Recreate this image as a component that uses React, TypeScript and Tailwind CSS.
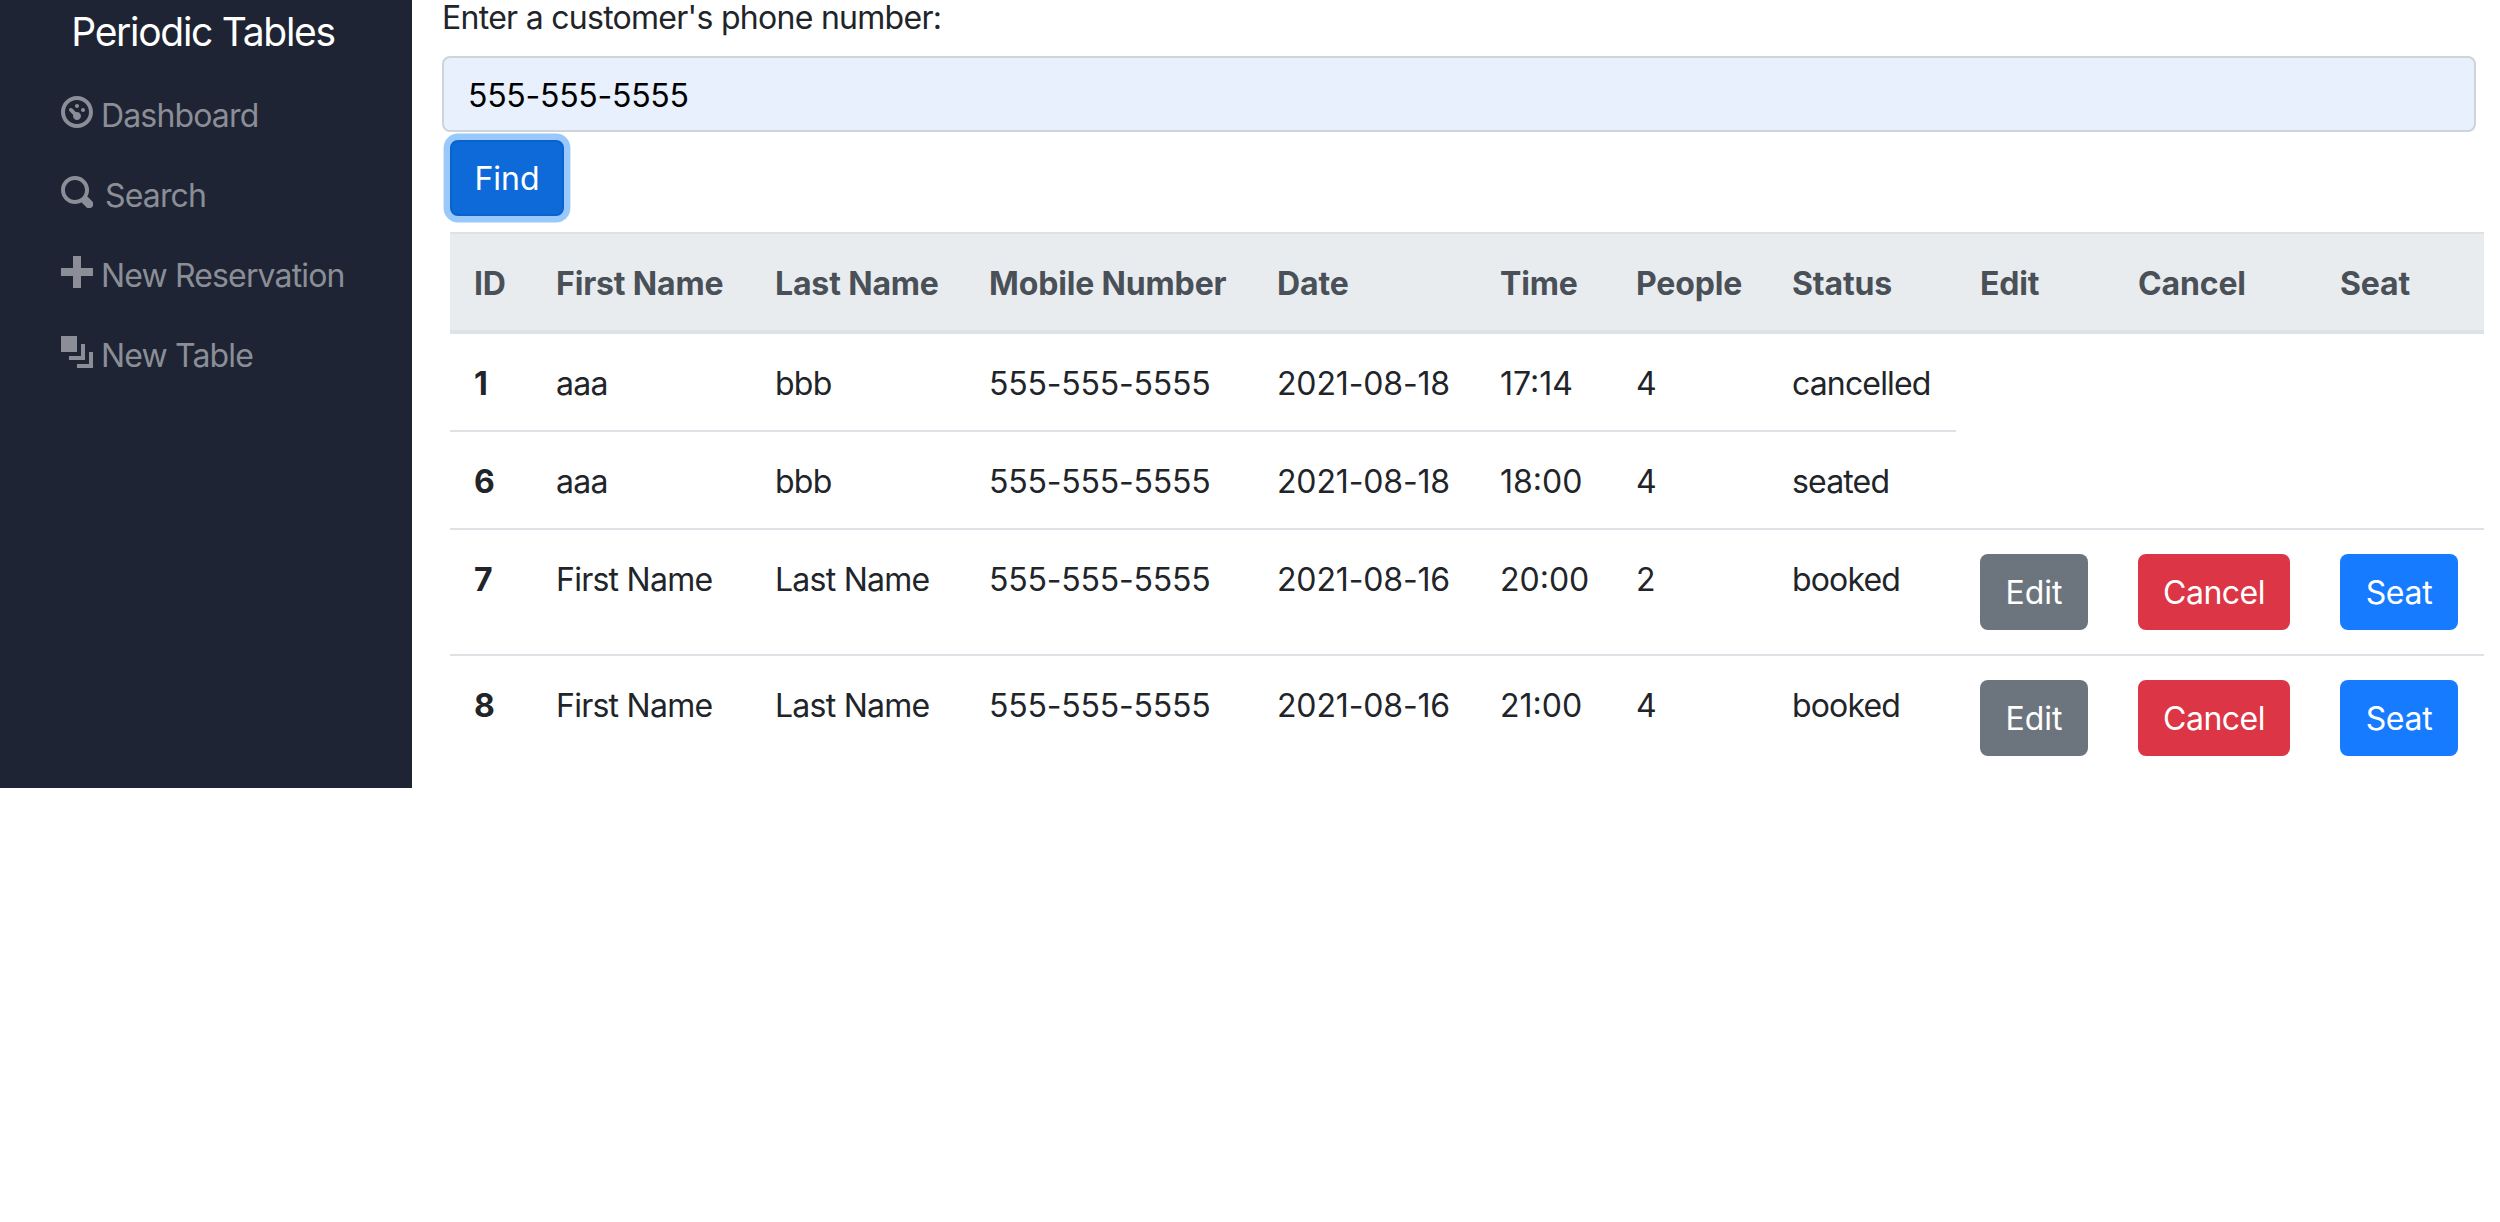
const reservations = [
  { id: 1, first: 'aaa', last: 'bbb', mobile: '555-555-5555', date: '2021-08-18', time: '17:14', people: 4, status: 'cancelled' },
  { id: 6, first: 'aaa', last: 'bbb', mobile: '555-555-5555', date: '2021-08-18', time: '18:00', people: 4, status: 'seated' },
  { id: 7, first: 'First Name', last: 'Last Name', mobile: '555-555-5555', date: '2021-08-16', time: '20:00', people: 2, status: 'booked' },
  { id: 8, first: 'First Name', last: 'Last Name', mobile: '555-555-5555', date: '2021-08-16', time: '21:00', people: 4, status: 'booked' }
];

const columns = ['ID', 'First Name', 'Last Name', 'Mobile Number', 'Date', 'Time', 'People', 'Status', 'Edit', 'Cancel', 'Seat'];

function NavIcon({ d }: { d: string }) {
  return (
    <svg viewBox="0 0 8 8" className="w-8 h-8 mt-[6px] shrink-0 fill-current">
      <path d={d} />
    </svg>
  );
}

const navItems = [
  {
    label: 'Dashboard',
    gap: 'ml-2',
    icon: 'M4 0c-2.2 0-4 1.8-4 4s1.8 4 4 4 4-1.8 4-4-1.8-4-4-4zm0 1c1.66 0 3 1.34 3 3s-1.34 3-3 3-3-1.34-3-3 1.34-3 3-3zm0 1c-.28 0-.5.22-.5.5s.22.5.5.5.5-.22.5-.5-.22-.5-.5-.5zm-1.66 1a.5.5 0 0 0-.19.84l.91.91c-.02.08-.06.16-.06.25 0 .55.45 1 1 1s1-.45 1-1-.45-1-1-1c-.09 0-.17.04-.25.06l-.91-.91a.5.5 0 0 0-.44-.16.5.5 0 0 0-.06 0zm3.16 0c-.28 0-.5.22-.5.5s.22.5.5.5.5-.22.5-.5-.22-.5-.5-.5z'
  },
  {
    label: 'Search',
    gap: 'ml-3',
    icon: 'M3.5 0c-1.93 0-3.5 1.57-3.5 3.5s1.57 3.5 3.5 3.5c.59 0 1.17-.14 1.66-.41a1 1 0 0 0 .13.13l1 1a1.02 1.02 0 1 0 1.44-1.44l-1-1a1 1 0 0 0-.16-.13c.27-.49.44-1.06.44-1.66 0-1.93-1.57-3.5-3.5-3.5zm0 1c1.39 0 2.5 1.11 2.5 2.5 0 .66-.24 1.27-.66 1.72-.01.01-.02.02-.03.03a1 1 0 0 0-.13.13c-.44.4-1.04.63-1.69.63-1.39 0-2.5-1.11-2.5-2.5s1.11-2.5 2.5-2.5z'
  },
  {
    label: 'New Reservation',
    gap: 'ml-2',
    icon: 'M3 0v3h-3v2h3v3h2v-3h3v-2h-3v-3h-2z'
  },
  {
    label: 'New Table',
    gap: 'ml-2',
    icon: 'M0 0v4h4v-4h-4zm5 2v3h-3v1h4v-4h-1zm2 2v3h-3v1h4v-4h-1z'
  }
];

export default function App() {
  return (
    <div className="flex items-stretch bg-white text-[32px] leading-[48px] text-[#212529] font-['Inter',sans-serif]">
      {/* Sidebar */}
      <aside className="w-[412px] shrink-0 bg-[#1e2433]">
        <h1 className="mt-2 pr-[6px] text-center text-[39px] leading-[48px] tracking-[-1.3px] font-normal text-white">
          Periodic Tables
        </h1>
        <nav className="mt-[34px] ml-[61px] flex flex-col gap-8 text-[#8b8e97] tracking-[-0.85px]">
          {navItems.map((item) => (
            <a key={item.label} className="flex h-12">
              <NavIcon d={item.icon} />
              <span className={`pt-[2px] ${item.gap}`}>{item.label}</span>
            </a>
          ))}
        </nav>
      </aside>

      {/* Search */}
      <main className="min-w-0 flex-1 pl-[30px] pb-2 -mt-2">
        <label className="block pt-[2px] mb-[14px] tracking-[-0.72px]">Enter a customer's phone number:</label>
        <input
          readOnly
          value="555-555-5555"
          className="block w-[2034px] h-[76px] px-6 pt-[2px] rounded-lg border-2 border-[#ced4da] bg-[#e8f0fe] text-black tracking-[-0.27px] outline-none"
        />
        <button className="block ml-2 mt-2 h-[76px] w-[114px] pt-[2px] rounded-lg border-2 border-[#0a62cc] bg-[#0d6ad8] text-white ring-[6.4px] ring-[#99c8fb]">
          Find
        </button>

        <table className="ml-2 mt-4 w-[2034px] table-fixed border-separate border-spacing-0">
          <colgroup>
            <col className="w-[82px]" />
            <col className="w-[219px]" />
            <col className="w-[214px]" />
            <col className="w-[288px]" />
            <col className="w-[223px]" />
            <col className="w-[136px]" />
            <col className="w-[156px]" />
            <col className="w-[188px]" />
            <col className="w-[158px]" />
            <col className="w-[202px]" />
            <col className="w-[168px]" />
          </colgroup>
          <thead>
            <tr className="bg-[#e9ecef] text-[#495057]">
              {columns.map((col) => (
                <th key={col} className="px-6 pt-[26px] pb-[22px] text-left align-bottom font-bold tracking-[-0.15px] border-t-2 border-b-4 border-[#dee2e6] whitespace-nowrap">
                  {col}
                </th>
              ))}
            </tr>
          </thead>
          <tbody>
            {reservations.map((r, i) => {
              const border = i === 0 ? '' : 'border-t-2 border-[#dee2e6]';
              return (
                <tr key={r.id}>
                  <th className={`px-6 pt-[26px] pb-[22px] text-left align-top font-bold ${border}`}>{r.id}</th>
                  <td className={`px-6 pt-[26px] pb-[22px] align-top whitespace-nowrap tracking-[-0.75px] ${border}`}>{r.first}</td>
                  <td className={`px-6 pt-[26px] pb-[22px] align-top whitespace-nowrap tracking-[-0.75px] ${border}`}>{r.last}</td>
                  <td className={`px-6 pt-[26px] pb-[22px] align-top whitespace-nowrap tracking-[-0.2px] ${border}`}>{r.mobile}</td>
                  <td className={`px-6 pt-[26px] pb-[22px] align-top whitespace-nowrap tracking-[-0.15px] ${border}`}>{r.date}</td>
                  <td className={`px-6 pt-[26px] pb-[22px] align-top whitespace-nowrap ${border}`}>{r.time}</td>
                  <td className={`px-6 pt-[26px] pb-[22px] align-top whitespace-nowrap ${border}`}>{r.people}</td>
                  <td className={`px-6 pt-[26px] pb-[22px] align-top whitespace-nowrap tracking-[-0.85px] ${border}`}>{r.status}</td>
                  {r.status === 'booked' && (
                    <>
                      <td className={`p-6 align-top ${border}`}>
                        <button className="block h-[76px] w-[108px] pt-[2px] rounded-lg bg-[#6c757d] text-white">Edit</button>
                      </td>
                      <td className={`p-6 align-top ${border}`}>
                        <button className="block h-[76px] w-[152px] pt-[2px] rounded-lg bg-[#dc3545] text-white tracking-[-0.5px]">Cancel</button>
                      </td>
                      <td className={`p-6 align-top ${border}`}>
                        <button className="block h-[76px] w-[118px] pt-[2px] rounded-lg bg-[#177bff] text-white tracking-[-0.3px]">Seat</button>
                      </td>
                    </>
                  )}
                </tr>
              );
            })}
          </tbody>
        </table>
      </main>
    </div>
  );
}
